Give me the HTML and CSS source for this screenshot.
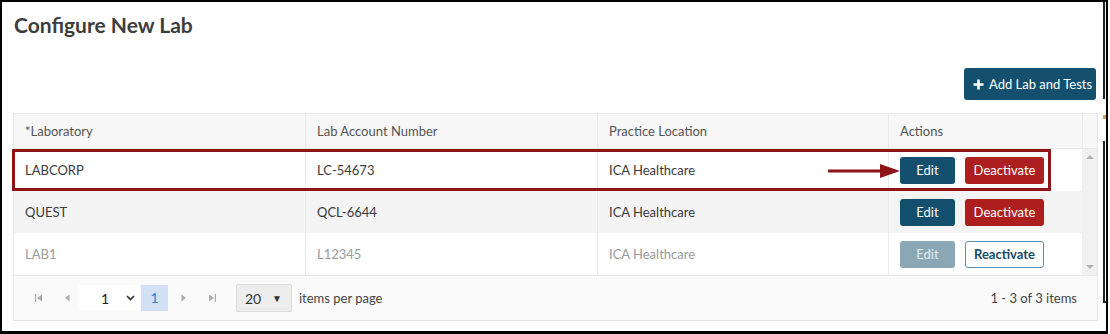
FILE: index.html
```html
<!DOCTYPE html>
<html lang="en">

<head>
    <meta charset="UTF-8">
    <title>Configure New Lab</title>
    <link rel="stylesheet" href="styles.css">
</head>

<body>
    <div class="frame">
        <div class="page">
            <h1 class="page-title">Configure New Lab</h1>
            <div class="toolbar">
                <button class="btn btn-primary btn-add">
                    <svg class="plus" width="11" height="11" viewBox="0 0 11 11">
                        <path d="M5.5 0.5v10M0.5 5.5h10" stroke="#fff" stroke-width="2.6" />
                    </svg>
                    Add Lab and Tests
                </button>
            </div>

            <div class="grid">
                <div class="grid-head">
                    <div class="cell">*Laboratory</div>
                    <div class="cell">Lab Account Number</div>
                    <div class="cell">Practice Location</div>
                    <div class="cell">Actions</div>
                    <div class="cell"></div>
                </div>

                <div class="grid-body">
                    <div class="rows">
                        <div class="row">
                            <div class="cell">LABCORP</div>
                            <div class="cell">LC-54673</div>
                            <div class="cell">ICA Healthcare</div>
                            <div class="cell actions">
                                <button class="btn btn-primary">Edit</button>
                                <button class="btn btn-danger">Deactivate</button>
                            </div>
                        </div>
                        <div class="row alt">
                            <div class="cell">QUEST</div>
                            <div class="cell">QCL-6644</div>
                            <div class="cell">ICA Healthcare</div>
                            <div class="cell actions">
                                <button class="btn btn-primary">Edit</button>
                                <button class="btn btn-danger">Deactivate</button>
                            </div>
                        </div>
                        <div class="row inactive">
                            <div class="cell">LAB1</div>
                            <div class="cell">L12345</div>
                            <div class="cell">ICA Healthcare</div>
                            <div class="cell actions">
                                <button class="btn btn-primary" disabled>Edit</button>
                                <button class="btn btn-outline">Reactivate</button>
                            </div>
                        </div>

                        <!-- annotation over the first row -->
                        <div class="highlight"></div>
                        <svg class="pointer" width="72" height="16" viewBox="0 0 72 16">
                            <path d="M0 8h55" stroke="#8e1418" stroke-width="3" />
                            <path d="M52 1l20 7-20 7z" fill="#8e1418" />
                        </svg>
                    </div>
                    <div class="scrollbar">
                        <span class="scroll-arrow up"></span>
                        <span class="scroll-arrow down"></span>
                    </div>
                </div>

                <div class="pager">
                    <svg class="pager-icon first" width="8" height="8" viewBox="0 0 8 8">
                        <path d="M0.5 0v8" stroke="#aaa" stroke-width="1.4" />
                        <path d="M7 0.5v7L2 4z" fill="#aaa" />
                    </svg>
                    <svg class="pager-icon prev" width="6" height="8" viewBox="0 0 6 8">
                        <path d="M5.5 0.5v7L1 4z" fill="#aaa" />
                    </svg>
                    <div class="page-select">
                        <span>1</span>
                        <svg width="9" height="6" viewBox="0 0 9 6">
                            <path d="M1 1l3.5 3.5L8 1" stroke="#333" stroke-width="1.6" fill="none" />
                        </svg>
                    </div>
                    <span class="page-current">1</span>
                    <svg class="pager-icon next" width="6" height="8" viewBox="0 0 6 8">
                        <path d="M0.5 0.5v7L5 4z" fill="#aaa" />
                    </svg>
                    <svg class="pager-icon last" width="8" height="8" viewBox="0 0 8 8">
                        <path d="M1 0.5v7L6 4z" fill="#aaa" />
                        <path d="M7.5 0v8" stroke="#aaa" stroke-width="1.4" />
                    </svg>
                    <div class="page-size">
                        <span>20</span>
                        <span class="caret">&#9660;</span>
                    </div>
                    <span class="pager-label">items per page</span>
                    <span class="pager-info">1 - 3 of 3 items</span>
                </div>
            </div>
        </div>
        <div class="edge">
            <div class="edge-top"></div>
            <div class="edge-mark"></div>
            <div class="edge-bracket"></div>
        </div>
    </div>
</body>

</html>
```

FILE: styles.css
```css
body {
    margin: 0;
    font-family: Lato, "Open Sans", Arial, sans-serif;
    font-size: 13px;
    color: #3a3a3a;
    background: #fff;
}

.frame {
    width: 1108px;
    height: 334px;
    box-sizing: border-box;
    border: 2px solid #000;
    border-bottom-width: 3px;
    display: flex;
    overflow: hidden;
}

.page {
    width: 1098px;
    padding: 10px 0 0 11px;
    box-sizing: border-box;
}

.page-title {
    margin: 0 0 0 1px;
    font-size: 21px;
    line-height: 25px;
    font-weight: bold;
    color: #3d3d3d;
}

.toolbar {
    display: flex;
    justify-content: flex-end;
    margin-top: 31px;
    width: 1083px;
}

.btn {
    font-family: inherit;
    font-size: 13px;
    border: 1px solid transparent;
    border-radius: 3px;
    color: #fff;
    height: 27px;
    padding: 0;
    white-space: nowrap;
    cursor: pointer;
}

.btn-primary {
    background: #14506e;
    width: 55px;
}

.btn-primary:disabled {
    background: #8ba7b6;
    color: #e4ecf0;
}

.btn-danger {
    background: #ad1f1f;
    width: 79px;
}

.btn-outline {
    background: #fff;
    border-color: #5b8fae;
    color: #17496a;
    font-weight: bold;
    width: 79px;
}

.btn-add {
    width: 132px;
    height: 32px;
    display: flex;
    align-items: center;
    gap: 5px;
    padding-left: 8px;
    font-size: 13px;
}

.plus {
    flex: none;
}

.grid {
    margin-top: 13px;
    width: 1085px;
    border: 1px solid #e8e8e8;
    border-bottom-color: #e2e2e2;
    box-sizing: border-box;
}

.grid-head {
    display: grid;
    grid-template-columns: 291px 292px 291px 194px 1fr;
    height: 34px;
    background: #f7f7f7;
    border-bottom: 1px solid #e8e8e8;
    color: #555;
}

.cell {
    display: flex;
    align-items: center;
    padding: 0 11px;
    border-left: 1px solid #ebebeb;
    white-space: nowrap;
}

.cell:first-child {
    border-left: none;
}

.grid-body {
    display: flex;
}

.rows {
    position: relative;
    width: 1068px;
}

.row {
    display: grid;
    grid-template-columns: 291px 292px 291px 1fr;
    height: 42px;
    background: #fff;
}

.row.alt {
    background: #f4f4f4;
}

.row.inactive {
    color: #9a9a9a;
}

.actions {
    gap: 10px;
}

.highlight {
    position: absolute;
    left: -2px;
    top: 0;
    width: 1039px;
    height: 42px;
    box-sizing: border-box;
    border: 3px solid #8e1418;
}

.pointer {
    position: absolute;
    left: 814px;
    top: 14px;
}

.scrollbar {
    flex: 1;
    background: #f1f1f1;
    display: flex;
    flex-direction: column;
    justify-content: space-between;
    align-items: center;
    padding: 6px 0 6px;
}

.scroll-arrow {
    width: 0;
    height: 0;
    border-left: 4px solid transparent;
    border-right: 4px solid transparent;
}

.scroll-arrow.up {
    border-bottom: 4px solid #b3b3b3;
}

.scroll-arrow.down {
    border-top: 4px solid #b3b3b3;
}

.pager {
    display: flex;
    align-items: center;
    height: 44px;
    background: #fafafa;
    border-top: 1px solid #e8e8e8;
}

.pager-icon.first {
    margin-left: 21px;
}

.pager-icon.prev {
    margin-left: 21px;
}

.page-select {
    display: flex;
    align-items: center;
    justify-content: space-between;
    width: 63px;
    height: 26px;
    box-sizing: border-box;
    margin-left: 8px;
    padding: 0 6px 0 23px;
    background: #fff;
    color: #222;
    font-size: 14px;
}

.page-current {
    width: 27px;
    height: 26px;
    line-height: 26px;
    text-align: center;
    background: #d2e1f5;
    color: #3e7bd4;
    font-size: 14px;
}

.pager-icon.next {
    margin-left: 13px;
}

.pager-icon.last {
    margin-left: 21px;
}

.page-size {
    display: flex;
    align-items: center;
    justify-content: space-between;
    width: 56px;
    height: 28px;
    box-sizing: border-box;
    margin-left: 20px;
    padding: 0 9px 0 8px;
    background: #ededed;
    border: 1px solid #dcdcdc;
    border-radius: 2px;
    color: #333;
    font-size: 14px;
}

.caret {
    font-size: 10px;
}

.pager-label {
    margin-left: 7px;
    color: #444;
}

.pager-info {
    margin-left: auto;
    margin-right: 20px;
    color: #444;
}

.edge {
    flex: 1;
    display: flex;
    flex-direction: column;
    padding-left: 3px;
}

.edge-top {
    height: 97px;
    border-left: 2px solid #222;
    background: #eee;
}

.edge-mark {
    height: 4px;
    margin-top: 16px;
    background: #c8a070;
}

.edge-bracket {
    height: 160px;
    margin-top: 22px;
    border-left: 2px solid #222;
    border-bottom: 2px solid #222;
}
```
